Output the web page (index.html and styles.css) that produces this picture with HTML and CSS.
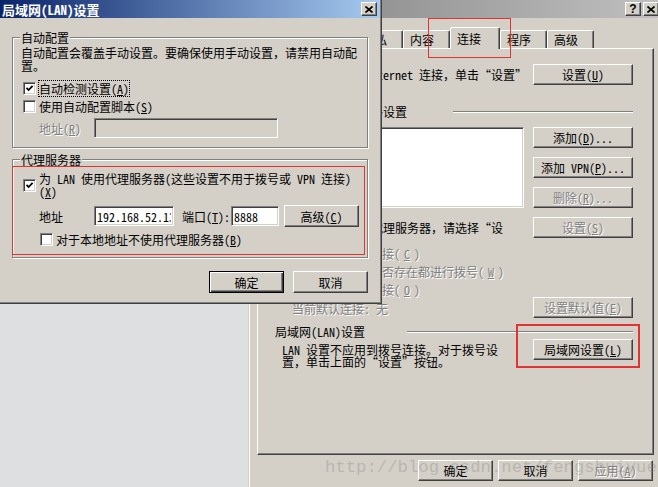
FILE: index.html
```html
<!DOCTYPE html>
<html lang="zh-CN">
  <head>
    <meta charset="UTF-8" />
    <title>局域网(LAN)设置</title>
    <link rel="stylesheet" href="styles.css">
  </head>
  <body>
    <!-- Internet 选项 (behind) -->
    <div class="window back">
      <div class="titlebar inactive">
        <span class="title">Internet 选项</span>
        <button class="cap-btn">?</button>
        <button class="cap-btn">
          <svg width="8" height="7" viewBox="0 0 8 7"><path d="M0.5 0.5 L7.5 6.5 M7.5 0.5 L0.5 6.5" stroke="#000" stroke-width="1.7"/></svg>
        </button>
      </div>

      <div class="tabs">
        <div class="tab">常规</div>
        <div class="tab">安全</div>
        <div class="tab">隐私</div>
        <div class="tab">内容</div>
        <div class="tab active">连接</div>
        <div class="tab">程序</div>
        <div class="tab">高级</div>
      </div>

      <div class="panel">
        <div class="row row-setup">
          <div class="setup-text">
            <span class="globe"></span>
            <p>要设置一个 Internet 连接，单击“设置”</p>
          </div>
          <button class="btn wide">设置(<u>U</u>)</button>
        </div>

        <div class="heading">
          <span class="heading-text">拨号和虚拟专用网络设置</span>
          <span class="sep dial-sep"></span>
        </div>

        <div class="row row-dial">
          <div class="dial-left">
            <div class="listbox"></div>
            <p class="proxy-note">如果要为连接配置代理服务器，请选择“设<br>置”。</p>
            <div class="radios">
              <div class="radio disabled"><span class="radio-dot"></span>从不进行拨号连接(<u>C</u>)</div>
              <div class="radio disabled"><span class="radio-dot"></span>不论网络连接是否存在都进行拨号(<u>W</u>)</div>
              <div class="radio disabled"><span class="radio-dot"></span>始终拨打默认连接(<u>O</u>)</div>
            </div>
            <p class="current disabled">当前默认连接: 无</p>
          </div>
          <div class="btn-col">
            <button class="btn wide">添加(<u>D</u>)...</button>
            <button class="btn wide">添加 VPN(<u>P</u>)...</button>
            <button class="btn wide disabled">删除(<u>R</u>)...</button>
            <button class="btn wide disabled">设置(<u>S</u>)</button>
            <button class="btn wide disabled set-default">设置默认值(<u>E</u>)</button>
          </div>
        </div>

        <div class="heading lan-heading">
          <span class="heading-text">局域网(LAN)设置</span>
          <span class="sep lan-sep"></span>
        </div>

        <div class="row row-lan">
          <p class="lan-note">LAN 设置不应用到拨号连接。对于拨号设<br>置，单击上面的“设置”按钮。</p>
          <button class="btn wide">局域网设置(<u>L</u>)</button>
        </div>
      </div>

      <div class="dialog-btns">
        <button class="btn">确定</button>
        <button class="btn">取消</button>
        <button class="btn disabled">应用(<u>A</u>)</button>
      </div>
    </div>

    <!-- LAN settings (front) -->
    <div class="window front">
      <div class="titlebar">
        <span class="title">局域网(LAN)设置</span>
        <button class="cap-btn">
          <svg width="8" height="7" viewBox="0 0 8 7"><path d="M0.5 0.5 L7.5 6.5 M7.5 0.5 L0.5 6.5" stroke="#000" stroke-width="1.7"/></svg>
        </button>
      </div>

      <div class="dlg-body">
        <div class="group">
          <div class="group-title">自动配置</div>
          <p class="group-note">自动配置会覆盖手动设置。要确保使用手动设置，请禁用自动配置。</p>
          <div class="check-row">
            <span class="checkbox">
              <svg width="9" height="9" viewBox="0 0 9 9"><path d="M1.5 3.8 L3.6 6 L7.6 1.8" fill="none" stroke="#000" stroke-width="1.8"/></svg>
            </span>
            <span class="focus">自动检测设置(<u>A</u>)</span>
          </div>
          <div class="check-row">
            <span class="checkbox"></span>
            <span>使用自动配置脚本(<u>S</u>)</span>
          </div>
          <div class="field-row">
            <span class="field-label disabled">地址(<u>R</u>)</span>
            <input class="textbox script-addr" disabled />
          </div>
        </div>

        <div class="group proxy-group">
          <div class="group-title">代理服务器</div>
          <div class="check-row tall">
            <span class="checkbox">
              <svg width="9" height="9" viewBox="0 0 9 9"><path d="M1.5 3.8 L3.6 6 L7.6 1.8" fill="none" stroke="#000" stroke-width="1.8"/></svg>
            </span>
            <span>为 LAN 使用代理服务器(这些设置不用于拨号或 VPN 连接)<br>(<u>X</u>)</span>
          </div>
          <div class="field-row proxy-row">
            <span class="field-label">地址</span>
            <input class="textbox addr" value="192.168.52.13" />
            <span class="port-label">端口(<u>T</u>):</span>
            <input class="textbox port" value="8888" />
            <button class="btn">高级(<u>C</u>)</button>
          </div>
          <div class="check-row sub">
            <span class="checkbox"></span>
            <span>对于本地地址不使用代理服务器(<u>B</u>)</span>
          </div>
        </div>

        <div class="dialog-btns">
          <button class="btn default">确定</button>
          <button class="btn">取消</button>
        </div>
      </div>
    </div>

    <div class="watermark">http://blog.csdn.net/fengshuiyue</div>

    <!-- red marks drawn on the screenshot -->
    <div class="mark mark-tab"></div>
    <div class="mark mark-proxy"></div>
    <div class="mark mark-lan"></div>
  </body>
</html>
```

FILE: styles.css
```css
* {
  box-sizing: border-box;
}
html,
body {
  margin: 0;
}
body {
  position: relative;
  width: 658px;
  height: 487px;
  overflow: hidden;
  background-color: #dedfe0;
  font-family: "Noto Sans Mono CJK SC", "Noto Sans CJK SC", sans-serif;
  font-size: 12px;
  line-height: 13px;
  color: #000;
}
p {
  margin: 0;
}
button,
input {
  font: inherit;
  color: inherit;
  margin: 0;
}
.disabled {
  color: #808080;
  text-shadow: 1px 1px 0 #fff;
}

/* windows */
.window {
  position: absolute;
  top: 0;
  background-color: #d4d0c8;
}
.front {
  left: 0;
  width: 382px;
  height: 304px;
  border-style: solid;
  border-color: #404040;
  border-width: 0 1px 1px 0;
  padding: 0 1px 1px 0;
  box-shadow: inset -1px -1px #808080;
  z-index: 2;
}
.back {
  left: 248px;
  width: 413px;
  height: 492px;
  border-left: 1px solid #d4d0c8;
  padding-left: 1px;
  box-shadow: inset 1px 0 #fff;
  z-index: 1;
}
.titlebar {
  display: flex;
  align-items: center;
  height: 18px;
  padding: 0 3px 0 2px;
  background: linear-gradient(to right, #0a246a, #a6caf0);
  color: #fff;
  font-size: 13px;
  font-weight: bold;
  white-space: nowrap;
}
.titlebar.inactive {
  padding-right: 2px;
  background: linear-gradient(to right, #808080, #c0c0c0);
  color: #d4d0c8;
}
.title {
  flex: 1;
}
.cap-btn {
  display: flex;
  align-items: center;
  justify-content: center;
  width: 16px;
  height: 14px;
  padding: 0;
  background-color: #d4d0c8;
  border: 1px solid;
  border-color: #fff #404040 #404040 #fff;
  box-shadow: inset -1px -1px #808080;
  font-family: "Liberation Sans", sans-serif;
  font-size: 12px;
  font-weight: bold;
  line-height: 12px;
  color: #000;
}
.cap-btn + .cap-btn {
  margin-left: 2px;
}

/* common controls */
.btn {
  width: 75px;
  height: 21px;
  padding: 0;
  background-color: #d4d0c8;
  border: 1px solid;
  border-color: #fff #404040 #404040 #fff;
  box-shadow: inset -1px -1px #808080;
  line-height: 13px;
  white-space: nowrap;
}
.btn.wide {
  width: 100px;
}
.btn.default {
  border-color: #000;
  box-shadow: inset 1px 1px #fff, inset -1px -1px #404040,
    inset -2px -2px #808080;
}
.textbox,
.listbox {
  background-color: #fff;
  border: 1px solid;
  border-color: #808080 #fff #fff #808080;
  box-shadow: inset 1px 1px #404040, inset -1px -1px #d4d0c8;
}
.textbox {
  height: 20px;
  padding: 0 2px;
  outline: none;
}
.textbox:disabled {
  background-color: #d4d0c8;
}
.checkbox {
  display: flex;
  align-items: center;
  justify-content: center;
  flex: none;
  width: 13px;
  height: 13px;
  margin-left: 2px;
  background-color: #fff;
  border: 1px solid;
  border-color: #808080 #fff #fff #808080;
  box-shadow: inset 1px 1px #404040, inset -1px -1px #d4d0c8;
}

/* front dialog */
.dlg-body {
  padding: 0 12px;
}
.group {
  margin-top: 19px;
  padding: 0 8px 9px 8px;
  border: 1px solid #808080;
  box-shadow: inset 1px 1px #fff, 1px 1px #fff;
}
.proxy-group {
  margin-top: 11px;
}
.group-title {
  width: fit-content;
  margin: -7px 0 0 -1px;
  padding: 0 1px;
  background-color: #d4d0c8;
}
.group-note {
  margin-top: 2px;
}
.check-row {
  display: flex;
  align-items: center;
  gap: 3px;
  height: 18px;
}
.group-note + .check-row {
  margin-top: 7px;
}
.check-row.tall {
  height: 26px;
  margin-top: 6px;
}
.check-row.sub {
  margin-top: 3px;
  padding-left: 17px;
}
.focus {
  margin-left: -1px;
  padding: 1px 0;
  border: 1px dotted #000;
}
.field-row {
  display: flex;
  align-items: center;
  height: 20px;
  margin-top: 3px;
  padding-left: 18px;
}
.field-label {
  width: 55px;
}
.script-addr {
  width: 184px;
}
.proxy-row {
  height: 22px;
  margin-top: 7px;
}
.proxy-row .btn {
  height: 22px;
  margin-left: 5px;
}
.addr {
  width: 80px;
}
.port-label {
  margin: 0 1px 0 8px;
}
.port {
  width: 48px;
}
.front .dialog-btns {
  display: flex;
  justify-content: flex-end;
  gap: 9px;
  margin-top: 13px;
}
.front .dialog-btns .btn {
  height: 22px;
}

/* back dialog: tabs */
.tabs {
  display: flex;
  align-items: flex-end;
  height: 21px;
  margin: 9px 0 0 7px;
  padding-left: 5px;
}
.tab {
  width: 47px;
  height: 18px;
  padding: 2px 0 0 6px;
  border: 1px solid;
  border-bottom: none;
  border-color: #fff #404040 #404040 #fff;
  border-radius: 2px 2px 0 0;
  box-shadow: inset -1px 0 #808080;
}
.tab.active {
  position: relative;
  z-index: 1;
  width: 50px;
  height: 22px;
  margin-bottom: -1px;
  padding-top: 4px;
  background-color: #d4d0c8;
}
.panel {
  width: 397px;
  height: 407px;
  margin-left: 7px;
  padding: 15px 20px 0 17px;
  border: 1px solid;
  border-color: #fff #404040 #404040 #fff;
  box-shadow: inset -1px -1px #808080;
}
.row {
  display: flex;
  justify-content: space-between;
  align-items: flex-start;
}
.row-setup {
  height: 21px;
}
.setup-text {
  display: flex;
  white-space: nowrap;
}
.globe {
  width: 24px;
}
.setup-text p {
  margin-top: 4px;
}
.heading {
  display: flex;
  align-items: center;
  height: 13px;
  margin-top: 20px;
}
.heading-text {
  flex: none;
}
.sep {
  flex: 1;
  height: 2px;
  border-top: 1px solid #808080;
  border-bottom: 1px solid #fff;
}
.dial-sep {
  margin-left: 46px;
}
.lan-sep {
  margin-left: 42px;
}
.row-dial {
  margin-top: 9px;
}
.dial-left {
  width: 249px;
}
.listbox {
  height: 81px;
}
.proxy-note {
  margin-top: 14px;
  line-height: 12px;
}
.radios {
  margin-top: -2px;
}
.radio {
  display: flex;
  align-items: center;
  gap: 4px;
  height: 18px;
  padding-left: 7px;
  white-space: nowrap;
}
.radio-dot {
  width: 12px;
  height: 12px;
  border-radius: 50%;
  background-color: #d4d0c8;
  border: 1px solid #808080;
}
.current {
  margin-top: 4px;
  padding-left: 17px;
}
.btn-col {
  display: flex;
  flex-direction: column;
  gap: 9px;
}
.btn-col .set-default {
  margin-top: 50px;
}
.lan-heading {
  margin-top: 7px;
}
.row-lan {
  margin-top: 1px;
}
.lan-note {
  margin-top: 5px;
  padding-left: 7px;
  line-height: 12px;
}
.back .dialog-btns {
  display: flex;
  justify-content: flex-end;
  gap: 5px;
  width: 397px;
  margin: 5px 0 0 7px;
  padding-right: 1px;
}

/* overlays */
.watermark {
  position: absolute;
  left: 325px;
  top: 458px;
  z-index: 3;
  font-family: "Liberation Mono", monospace;
  font-size: 17.3px;
  line-height: 20px;
  color: rgba(130, 130, 130, 0.35);
  white-space: nowrap;
}
.mark {
  position: absolute;
  z-index: 4;
  border: 1px solid #e23333;
}
.mark-tab {
  left: 428px;
  top: 18px;
  width: 83px;
  height: 40px;
}
.mark-proxy {
  left: 12px;
  top: 166px;
  width: 353px;
  height: 89px;
}
.mark-lan {
  left: 516px;
  top: 324px;
  width: 124px;
  height: 44px;
  border-width: 2px;
}
```
